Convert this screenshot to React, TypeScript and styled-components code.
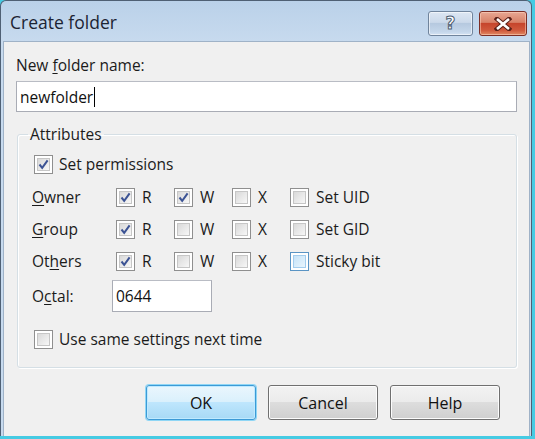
import React from "react";
import styled, { createGlobalStyle, css } from "styled-components";

const Global = createGlobalStyle`
  html, body { margin: 0; padding: 0; }
  body {
    width: 535px;
    height: 439px;
    overflow: hidden;
    background: #46cbe3;
    font-family: "Open Sans", "Noto Sans", sans-serif;
  }
`;

const Window = styled.div`
  width: 530px;
  height: 435px;
  border: 1px solid #4f6074;
  border-bottom: none;
  border-radius: 6px 6px 0 0;
  background: linear-gradient(#bad1e9, #c7daee 40px, #c7daee);
  display: flex;
  flex-direction: column;
`;

const TitleBar = styled.div`
  height: 40px;
  display: flex;
  align-items: center;
  padding: 0 4px 0 9px;
`;

const Title = styled.div`
  flex: 1;
  font-size: 17.5px;
  color: #1c2433;
  margin-top: 2px;
`;

const CaptionBtn = styled.div<{ $close?: boolean }>`
  height: 25px;
  width: ${(p) => (p.$close ? 48 : 45)}px;
  margin-left: ${(p) => (p.$close ? 6 : 0)}px;
  margin-top: 5px;
  border-radius: 3px;
  box-sizing: border-box;
  display: flex;
  align-items: center;
  justify-content: center;
  ${(p) =>
    p.$close
      ? css`
          border: 1px solid #7d2e25;
          background: linear-gradient(#e8a793, #d88268 45%, #c6452c 50%, #d05a3d 80%, #e08a64);
          box-shadow: inset 0 0 0 1px rgba(255, 220, 200, 0.5);
        `
      : css`
          border: 1px solid #70849c;
          background: linear-gradient(#dde7f3, #cbd9ea 45%, #b6c9df 50%, #c4d6ea 85%, #d4e3f3);
          box-shadow: inset 0 0 0 1px rgba(255, 255, 255, 0.55);
        `}
`;

const HelpGlyph = styled.span`
  font-family: "DejaVu Sans", sans-serif;
  font-weight: bold;
  font-size: 17px;
  line-height: 1;
  color: #ffffff;
  -webkit-text-stroke: 1px #4e5d70;
  margin-top: -1px;
`;

const Client = styled.div`
  flex: 1;
  margin: 0 1px 0 2px;
  background: #f0f0f0;
  border: 1px solid #9fb2c7;
  border-bottom: none;
  padding: 13px 12px 0 12px;
  display: flex;
  flex-direction: column;
  color: #1b1b1b;
  font-size: 15.5px;
`;

const Label = styled.div`
  height: 20px;
  line-height: 20px;
  white-space: nowrap;
`;

const U = styled.span`
  text-decoration: underline;
  text-underline-offset: 2px;
`;

const TextInput = styled.div<{ $width?: number; $height?: number; $top?: number }>`
  margin-top: ${(p) => p.$top ?? 6}px;
  height: ${(p) => p.$height ?? 31}px;
  box-sizing: border-box;
  ${(p) => (p.$width ? `width: ${p.$width}px;` : "")}
  background: #ffffff;
  border: 1px solid #a9acb5;
  border-top-color: #b9bcc4;
  display: flex;
  align-items: center;
  padding-left: 3px;
  font-size: 15.5px;
  color: #111;
`;

const Caret = styled.span`
  display: inline-block;
  width: 1px;
  height: 20px;
  background: #000;
  margin-left: 1px;
`;

const Group = styled.fieldset`
  margin: 13px 0 0 1px;
  padding: 0 0 17px 16px;
  border: 1px solid #d5dfe5;
  border-radius: 3px;
  box-shadow: inset 1px 1px 0 #fff, 1px 1px 0 #fff;
  display: flex;
  flex-direction: column;
  height: 243px;
  box-sizing: border-box;
  min-width: 0;
`;

const Legend = styled.legend`
  padding: 0 2px;
  margin-left: -6px;
  font-size: 15.5px;
  line-height: 18px;
  margin-top: -2px;
`;

const CheckRow = styled.label<{ $top: number }>`
  display: flex;
  align-items: center;
  gap: 6px;
  height: 20px;
  margin-top: ${(p) => p.$top}px;
  white-space: nowrap;
`;

const Box = styled.span<{ $hot?: boolean }>`
  width: 19px;
  height: 19px;
  box-sizing: border-box;
  flex: none;
  border: 1px solid ${(p) => (p.$hot ? "#5a94c4" : "#8f8f8f")};
  background: #fff;
  padding: 2px;
  display: flex;
`;

const BoxInner = styled.span<{ $hot?: boolean }>`
  flex: 1;
  border: 1px solid ${(p) => (p.$hot ? "#a3cdee" : "#c6c6c6")};
  background: ${(p) =>
    p.$hot
      ? "linear-gradient(135deg, #c6e3f8, #e9f5fd)"
      : "linear-gradient(135deg, #d9d9d9, #f7f7f7)"};
  display: flex;
  align-items: center;
  justify-content: center;
`;

const Grid = styled.div`
  display: grid;
  grid-template-columns: 84px 58px 58px 58px auto;
  grid-auto-rows: 32px;
  margin-top: 7px;
  margin-left: -2px;
  align-items: center;
`;

const Cell = styled.div`
  display: flex;
  align-items: center;
  gap: 7px;
  white-space: nowrap;
`;

const OctalRow = styled.div`
  display: flex;
  align-items: center;
  margin-top: 3px;
  margin-left: -2px;
  height: 32px;
`;

const OctalLabel = styled.div`
  width: 80px;
`;

const ButtonBar = styled.div`
  display: flex;
  justify-content: flex-end;
  gap: 12px;
  margin-top: 17px;
  padding-right: 17px;
`;

const Button = styled.div<{ $default?: boolean }>`
  width: 110px;
  height: 35px;
  box-sizing: border-box;
  border-radius: 3px;
  display: flex;
  align-items: center;
  justify-content: center;
  font-size: 16px;
  color: #111;
  ${(p) =>
    p.$default
      ? css`
          border: 1px solid #3c9ad6;
          background: linear-gradient(#eaf6fd, #d9f0fc 50%, #bee6fd 50%, #a7d9f5);
          box-shadow: 0 0 0 1px #8fd6f5, inset 0 0 0 1px #bfeaff;
        `
      : css`
          border: 1px solid #707070;
          background: linear-gradient(#f2f2f2, #ebebeb 50%, #dddddd 50%, #cfcfcf);
          box-shadow: inset 0 0 0 1px #fcfcfc;
        `}
`;

const Check = () => (
  <svg width="11" height="11" viewBox="0 0 11 11">
    <path d="M1.5 5.5 L4.2 8.8 L9.6 1.4" fill="none" stroke="#3c5394" strokeWidth="2" />
  </svg>
);

const CheckBox = ({ checked, hot }: { checked?: boolean; hot?: boolean }) => (
  <Box $hot={hot}>
    <BoxInner $hot={hot}>{checked && <Check />}</BoxInner>
  </Box>
);

const CloseIcon = () => (
  <svg width="18" height="14" viewBox="0 0 18 14">
    <path
      d="M3 2 L15 12 M15 2 L3 12"
      stroke="#5a2018"
      strokeWidth="4.6"
      strokeLinecap="square"
      fill="none"
    />
    <path d="M3 2 L15 12 M15 2 L3 12" stroke="#ffffff" strokeWidth="2.6" fill="none" />
  </svg>
);

type Perm = { label: React.ReactNode; r: boolean; w: boolean; x: boolean; extra: string; hot?: boolean };

const perms: Perm[] = [
  { label: <><U>O</U>wner</>, r: true, w: true, x: false, extra: "Set UID" },
  { label: <><U>G</U>roup</>, r: true, w: false, x: false, extra: "Set GID" },
  { label: <>Ot<U>h</U>ers</>, r: true, w: false, x: false, extra: "Sticky bit", hot: true },
];

export default function App() {
  return (
    <>
      <Global />
      <Window>
        <TitleBar>
          <Title>Create folder</Title>
          <CaptionBtn>
            <HelpGlyph>?</HelpGlyph>
          </CaptionBtn>
          <CaptionBtn $close>
            <CloseIcon />
          </CaptionBtn>
        </TitleBar>
        <Client>
          <Label>
            New <U>f</U>older name:
          </Label>
          <TextInput>
            newfolder
            <Caret />
          </TextInput>
          <Group>
            <Legend>Attributes</Legend>
            <CheckRow $top={11}>
              <CheckBox checked />
              Set permissions
            </CheckRow>
            <Grid>
              {perms.map((p, i) => (
                <React.Fragment key={i}>
                  <Cell>
                    <span>{p.label}</span>
                  </Cell>
                  <Cell>
                    <CheckBox checked={p.r} />R
                  </Cell>
                  <Cell>
                    <CheckBox checked={p.w} />W
                  </Cell>
                  <Cell>
                    <CheckBox checked={p.x} />X
                  </Cell>
                  <Cell>
                    <CheckBox hot={p.hot} />
                    {p.extra}
                  </Cell>
                </React.Fragment>
              ))}
            </Grid>
            <OctalRow>
              <OctalLabel>
                O<U>c</U>tal:
              </OctalLabel>
              <TextInput $width={100} $height={32} $top={0}>
                0644
              </TextInput>
            </OctalRow>
            <CheckRow $top={17}>
              <CheckBox />
              Use same settings next time
            </CheckRow>
          </Group>
          <ButtonBar>
            <Button $default>OK</Button>
            <Button>Cancel</Button>
            <Button>Help</Button>
          </ButtonBar>
        </Client>
      </Window>
    </>
  );
}
